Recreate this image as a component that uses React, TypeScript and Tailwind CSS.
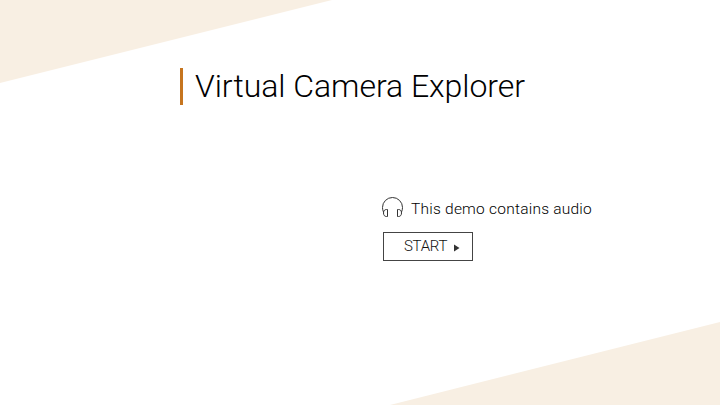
export default function App() {
  return (
    <main className="relative isolate flex h-[405px] w-[720px] flex-col overflow-hidden bg-white font-[Roboto,sans-serif] font-light text-black">
      <svg className="absolute inset-0 -z-10" width="720" height="405" fill="#f8efe3">
        <path d="M0 0H332L0 83Z" />
        <path d="M720 322V405H390Z" />
      </svg>
      <h1 className="mt-[68px] ml-[180px] flex h-[37px] w-fit items-center border-l-[3px] border-[#c6751f] pl-[12px] text-[32px] leading-[37px] tracking-[-0.04px] whitespace-nowrap">
        Virtual Camera Explorer
      </h1>
      <section className="mt-[91px] ml-[382px] flex flex-col items-start">
        <div className="flex h-[24px] items-center gap-[8px]">
          <svg width="21" height="22" viewBox="0 0 21 22" fill="none" stroke="#333" strokeWidth="1">
            <path d="M1.500 15C.8 13.500.5 12 .5 10.500a10 10 0 0 1 20 0c0 1.500-.3 3-1 4.500M5.500 12.500v7h-1c-2 0-3-1.500-3-3.500s1-3.500 3-3.500zM15.500 12.500v7h1c2 0 3-1.500 3-3.500s-1-3.500-3-3.500z" />
          </svg>
          <p className="pt-[1px] text-[15.5px] leading-[24px] tracking-[0.23px] whitespace-nowrap text-black">This demo contains audio</p>
        </div>
        <button className="mt-[12px] ml-[1px] flex h-[29px] w-[90px] items-center border border-[#444] pl-[20px] text-[15px] tracking-[-0.3px] whitespace-nowrap text-[#111]">
          START
          <svg className="mt-[2px] ml-[7px]" width="6" height="8" fill="#333"><path d="M0 .5L5.500 4L0 7.500Z" /></svg>
        </button>
      </section>
    </main>
  );
}
